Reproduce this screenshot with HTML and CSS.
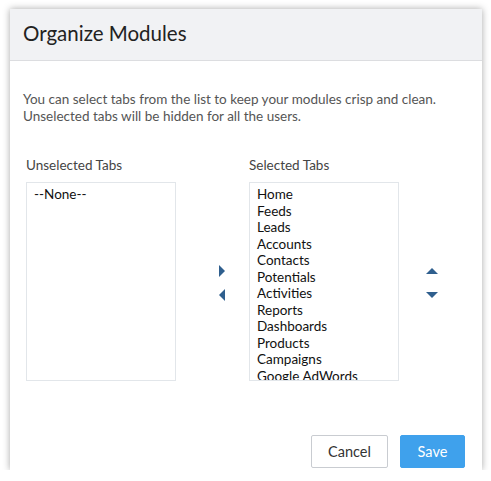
FILE: index.html
```html
<!DOCTYPE html>
<html>
<head>
<meta charset="utf-8">
<link rel="stylesheet" href="styles.css">
</head>
<body>
<div class="dialog">
  <div class="header"><h1 class="title">Organize Modules</h1></div>
  <div class="content">
    <p class="desc">You can select tabs from the list to keep your modules crisp and clean.<br>Unselected tabs will be hidden for all the users.</p>
    <div class="lists">
      <div class="col">
        <div class="label">Unselected Tabs</div>
        <div class="box">
          <div class="item">--None--</div>
        </div>
      </div>
      <div class="movers">
        <svg class="arr" width="8" height="12" viewBox="0 0 8 12"><polygon points="1,0 7,6 1,12" fill="#2f5f8e"/></svg>
        <svg class="arr" width="8" height="12" viewBox="0 0 8 12"><polygon points="7,0 1,6 7,12" fill="#2f5f8e"/></svg>
      </div>
      <div class="col">
        <div class="label">Selected Tabs</div>
        <div class="box">
          <div class="item">Home</div>
          <div class="item">Feeds</div>
          <div class="item">Leads</div>
          <div class="item">Accounts</div>
          <div class="item">Contacts</div>
          <div class="item">Potentials</div>
          <div class="item">Activities</div>
          <div class="item">Reports</div>
          <div class="item">Dashboards</div>
          <div class="item">Products</div>
          <div class="item">Campaigns</div>
          <div class="item">Google AdWords</div>
        </div>
      </div>
      <div class="order">
        <svg class="arr" width="12" height="8" viewBox="0 0 12 8"><polygon points="0,7 6,1 12,7" fill="#2f5f8e"/></svg>
        <svg class="arr" width="12" height="8" viewBox="0 0 12 8"><polygon points="0,1 6,7 12,1" fill="#2f5f8e"/></svg>
      </div>
    </div>
  </div>
  <div class="footer">
    <button class="btn cancel">Cancel</button>
    <button class="btn save">Save</button>
  </div>
</div>
</body>
</html>
```
FILE: styles.css
```css
html, body {
  margin: 0;
  padding: 0;
  background: #fff;
}
body {
  font-family: Lato, "Open Sans", sans-serif;
}
.dialog {
  margin: 9px 0 0 10px;
  width: 472px;
  height: 461px;
  background: #fff;
  box-shadow: 0 0 7px rgba(0,0,0,0.35);
  display: flex;
  flex-direction: column;
}
.header {
  height: 51px;
  background: #f1f2f4;
  border-bottom: 1px solid #dcdde0;
  display: flex;
  align-items: center;
  padding-left: 13px;
}
.title {
  margin: 0 0 3px 0;
  font-size: 20.5px;
  font-weight: 400;
  color: #222;
}
.content {
  padding: 0 16px;
  flex: 1;
}
.desc {
  margin: 30px 0 0 -3px;
  font-size: 13.5px;
  line-height: 16.5px;
  color: #555;
}
.lists {
  display: flex;
  margin-top: 33px;
}
.col {
  width: 150px;
}
.label {
  font-size: 13.5px;
  color: #444;
  line-height: 16px;
  margin-bottom: 9px;
}
.box {
  height: 199px;
  border: 1px solid #e2e6ea;
  overflow: hidden;
  padding: 3px 0 0 7px;
  box-sizing: border-box;
}
.item {
  font-size: 13.5px;
  line-height: 16.5px;
  color: #111;
  white-space: nowrap;
}
.movers, .order {
  display: flex;
  flex-direction: column;
  align-items: center;
  justify-content: center;
  gap: 12px;
  padding-top: 27px;
  box-sizing: border-box;
}
.movers {
  width: 73px;
  padding-left: 42px;
  align-items: flex-start;
}
.order {
  width: 66px;
  gap: 16px;
}
.footer {
  display: flex;
  justify-content: flex-end;
  align-items: flex-end;
  gap: 12px;
  padding: 0 17px 2px 0;
  height: 36px;
}
.btn {
  height: 33px;
  font-family: Lato, "Open Sans", sans-serif;
  font-size: 14.5px;
  border-radius: 2px;
  cursor: pointer;
}
.cancel {
  width: 77px;
  background: #fff;
  border: 1px solid #c9ccd1;
  color: #333;
}
.save {
  width: 65px;
  background: #3fa1ec;
  border: 1px solid #3fa1ec;
  color: #fff;
}
```
